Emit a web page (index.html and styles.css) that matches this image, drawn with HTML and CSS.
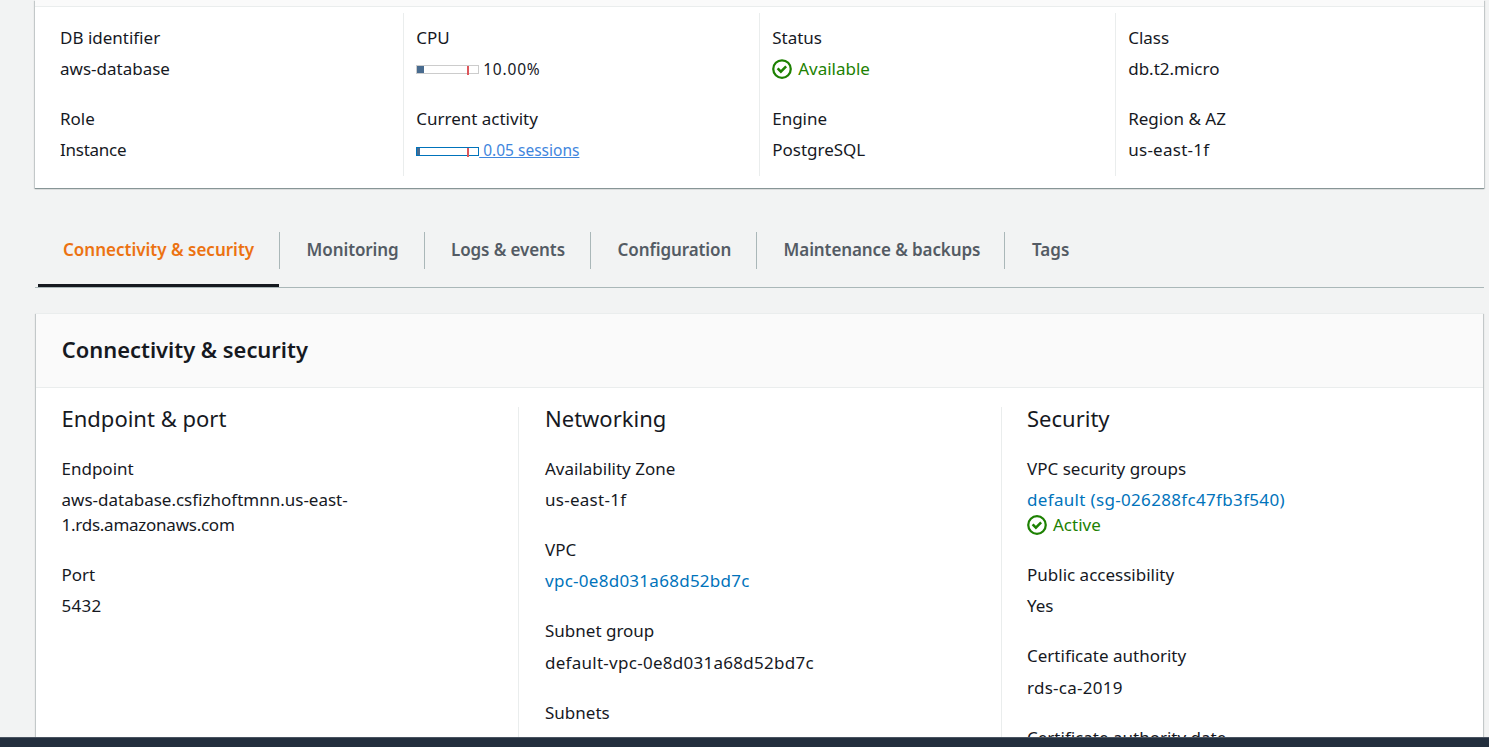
FILE: index.html
```
<!DOCTYPE html>
<html lang="en">
<head>
<meta charset="utf-8">
<title>RDS database</title>
<link rel="stylesheet" href="styles.css">
</head>
<body>
<svg class="defs" width="0" height="0" aria-hidden="true">
  <symbol id="ok" viewBox="0 0 16 16">
    <circle cx="8" cy="8" r="7" fill="none" stroke="currentColor" stroke-width="1.8"/>
    <path d="M4.5 7.5 7.1 10.1 11.3 5.9" fill="none" stroke="currentColor" stroke-width="2"/>
  </symbol>
</svg>
<div class="page">
  <main class="content">
    <section class="card summary">
      <div class="summary-head"></div>
      <div class="summary-grid">
        <div class="col">
          <dl><dt>DB identifier</dt><dd>aws-database</dd></dl>
          <dl><dt>Role</dt><dd class="tight">Instance</dd></dl>
        </div>
        <div class="col">
          <dl><dt>CPU</dt><dd class="metric"><span class="meter"><i class="fill cpu"></i><i class="limit"></i></span><span class="reading">10.00%</span></dd></dl>
          <dl><dt>Current activity</dt><dd class="metric"><span class="meter live"><i class="fill load"></i><i class="limit"></i></span><a class="reading sessions" href="#">&nbsp;0.05 sessions</a></dd></dl>
        </div>
        <div class="col">
          <dl><dt>Status</dt><dd class="good"><svg class="icon"><use href="#ok"/></svg>Available</dd></dl>
          <dl><dt>Engine</dt><dd>PostgreSQL</dd></dl>
        </div>
        <div class="col">
          <dl><dt>Class</dt><dd>db.t2.micro</dd></dl>
          <dl><dt>Region &amp; AZ</dt><dd class="id">us-east-1f</dd></dl>
        </div>
      </div>
    </section>
    <nav class="tabs">
      <a class="tab t1 active">Connectivity &amp; security</a>
      <a class="tab t2">Monitoring</a>
      <a class="tab t3">Logs &amp; events</a>
      <a class="tab t4">Configuration</a>
      <a class="tab t5">Maintenance &amp; backups</a>
      <a class="tab t6">Tags</a>
    </nav>
    <section class="card details">
      <h2 class="title">Connectivity &amp; security</h2>
      <div class="details-grid">
        <div class="col">
          <h3>Endpoint &amp; port</h3>
          <dl><dt>Endpoint</dt><dd>aws-database.csfizhoftmnn.us-east-<br><span class="tight">1.rds.amazonaws.com</span></dd></dl>
          <dl><dt>Port</dt><dd class="id">5432</dd></dl>
        </div>
        <div class="col">
          <h3>Networking</h3>
          <dl><dt>Availability Zone</dt><dd class="id">us-east-1f</dd></dl>
          <dl><dt>VPC</dt><dd><a class="link id" href="#">vpc-0e8d031a68d52bd7c</a></dd></dl>
          <dl><dt>Subnet group</dt><dd class="id">default-vpc-0e8d031a68d52bd7c</dd></dl>
          <dl><dt>Subnets</dt><dd><a class="link" href="#">subnet-0d</a></dd></dl>
        </div>
        <div class="col">
          <h3>Security</h3>
          <dl><dt>VPC security groups</dt><dd><a class="link group" href="#">default (sg-026288fc47fb3f540)</a><div class="good"><svg class="icon"><use href="#ok"/></svg>Active</div></dd></dl>
          <dl><dt>Public accessibility</dt><dd>Yes</dd></dl>
          <dl><dt>Certificate authority</dt><dd class="id">rds-ca-2019</dd></dl>
          <dl><dt>Certificate authority date</dt></dl>
        </div>
      </div>
    </section>
  </main>
  <footer class="footer"></footer>
</div>
</body>
</html>
```
FILE: styles.css
```
* { box-sizing: border-box; }
body {
  margin: 0;
  background: #f2f3f3;
  color: #16191f;
  font: 17px/25px "Noto Sans", "Open Sans", sans-serif;
  font-feature-settings: "liga" 1;
}
dl, dd, h2, h3 { margin: 0; }
a { text-decoration: none; }
.defs { display: block; }
.page { display: flex; flex-direction: column; height: 747px; overflow: hidden; }
.content { flex: 1; min-height: 0; overflow: hidden; padding: 0 5px 0 35px; }
.footer { flex: none; height: 10px; background: #232f3e; border-top: 1px solid #4a5461; }

.card { background: #fff; box-shadow: 0 1px 1px 0 rgba(0, 28, 36, .3), 1px 1px 1px 0 rgba(0, 28, 36, .15), -1px 1px 1px 0 rgba(0, 28, 36, .15); }
.summary { height: 188px; }
.summary { box-shadow: 0 1px 0 0 #879596, 0 1px 1px 0 rgba(0, 28, 36, .3), 1px 1px 1px 0 rgba(0, 28, 36, .15), -1px 1px 1px 0 rgba(0, 28, 36, .15); }
.summary-head { height: 7px; background: #fafafa; border-bottom: 1px solid #eaeded; }
.summary-grid { display: grid; grid-template-columns: 368px 356px 356px 1fr; padding-top: 6px; }
.summary-grid .col { height: 163px; padding: 11.7px 0 0 25px; }
.col + .col { border-left: 1px solid #eaeded; }
.summary-grid .col + .col { padding-left: 12.2px; }

dl { padding-bottom: 25px; }
dd { padding-top: 6.25px; }
.good { display: flex; align-items: center; color: #1d8102; }
.icon { width: 20px; height: 20px; margin: 1px 6px 0 0; }
.link { color: #0073bb; }
.id { letter-spacing: 0.27px; }
.group { letter-spacing: 0.33px; }
.tight { letter-spacing: -0.25px; }

.metric { display: flex; align-items: center; }
.meter { position: relative; width: 63px; height: 9px; margin-top: 3px; border: 1px solid #ccc; }
.meter.live { border-color: #0073bb; }
.fill { display: block; height: 7px; background: #486b8f; }
.cpu { width: 7px; }
.load { width: 3px; }
.limit { position: absolute; top: 0; left: 50px; width: 2px; height: 9px; background: #dd565b; }
.reading { padding: 2px 0 0 4px; font-size: 15.5px; line-height: 23px; letter-spacing: 0.8px; }
.sessions { padding-left: 0; letter-spacing: 0; color: #3f86dd; text-decoration: underline; }

.tabs { display: flex; height: 100px; padding: 44px 0 0 3px; border-bottom: 1px solid #aab7b8; }
.tab { height: 55px; padding: 5px 0 0 25px; color: #545b64; font-weight: 600; position: relative; }
.tab + .tab::before { content: ""; position: absolute; left: 0; top: 0; width: 1px; height: 37px; background: #aab7b8; }
.tab + .tab { padding-left: 27.6px; letter-spacing: -0.1px; }
.tab + .t3 { padding-left: 27px; }
.tab.t6 { padding-left: 28px; letter-spacing: 0; }
.tab.active { color: #ec7211; border-bottom: 3px solid #16191f; }
.t1 { width: 241px; }
.t2 { width: 145px; }
.t3 { width: 166px; }
.t4 { width: 166px; }
.t5 { width: 248px; }

.details { margin: 25px 1px 0; height: 460px; border-top: 1px solid #eaeded; }
.title { height: 74px; padding: 22px 25.8px 0; background: #fafafa; border-bottom: 1px solid #eaeded; font-size: 21.9px; font-weight: 600; line-height: 28px; }
.details-grid { display: grid; grid-template-columns: 482px 483px 1fr; padding-top: 19px; }
.details-grid .col { height: 380px; padding-left: 25.5px; }
.details-grid .col:nth-child(2) { padding-left: 26px; }
.details-grid .col:last-child { padding-left: 25px; }
h3 { height: 48.8px; font-size: 22px; font-weight: 400; line-height: 22px; }
```
